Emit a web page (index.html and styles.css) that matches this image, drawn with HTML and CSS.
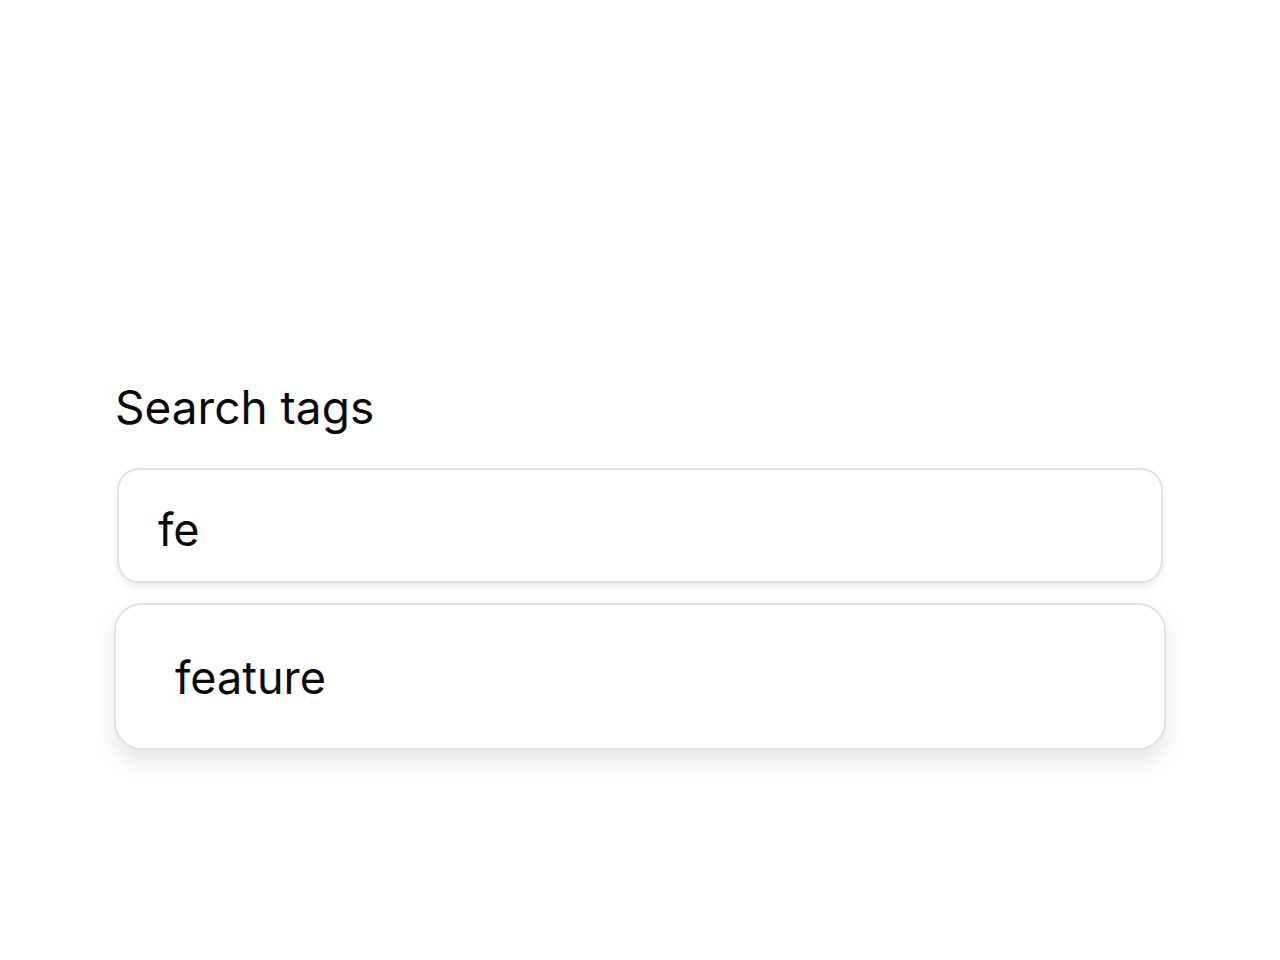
FILE: index.html
```html
<!DOCTYPE html>
<html lang="en">
<head>
<meta charset="utf-8">
<title>Search tags</title>
<link rel="stylesheet" href="styles.css">
</head>
<body>
<main class="page">
  <div class="combo">
    <label class="combo-label" for="tag-search">Search tags</label>
    <div class="combo-input">
      <input id="tag-search" class="combo-field" type="text" value="fe">
    </div>
    <ul class="combo-list" role="listbox">
      <li class="combo-option" role="option">feature</li>
    </ul>
  </div>
</main>
</body>
</html>
```
FILE: styles.css
```css
html, body {
  margin: 0;
  padding: 0;
  background: #ffffff;
}
body {
  font-family: Inter, "Noto Sans", "Liberation Sans", sans-serif;
  color: #0a0a0a;
  min-height: 960px;
}
.page {
  padding: 378px 114px 120px 114px;
}
.combo {
  display: flex;
  flex-direction: column;
}
.combo-label {
  font-size: 46px;
  line-height: 58px;
  margin-left: 1px;
  margin-bottom: 32px;
}
.combo-input {
  margin: 0 3px;
  height: 115px;
  box-sizing: border-box;
  border: 2px solid #e2e2e2;
  border-radius: 22px;
  box-shadow: 0 4px 6px rgba(0, 0, 0, 0.08);
  display: flex;
  align-items: center;
  background: #fff;
}
.combo-field {
  border: none;
  outline: none;
  background: transparent;
  font: inherit;
  font-size: 45px;
  color: #0a0a0a;
  padding: 8px 0 0 39px;
  width: 100%;
}
.combo-list {
  list-style: none;
  margin: 20px 0 0 0;
  padding: 0;
  height: 147px;
  box-sizing: border-box;
  border: 2px solid #e2e2e2;
  border-radius: 28px;
  box-shadow: 0 12px 22px rgba(0, 0, 0, 0.1);
  background: #fff;
  display: flex;
  align-items: center;
}
.combo-option {
  font-size: 45px;
  padding-left: 59px;
  padding-top: 2px;
}
```
